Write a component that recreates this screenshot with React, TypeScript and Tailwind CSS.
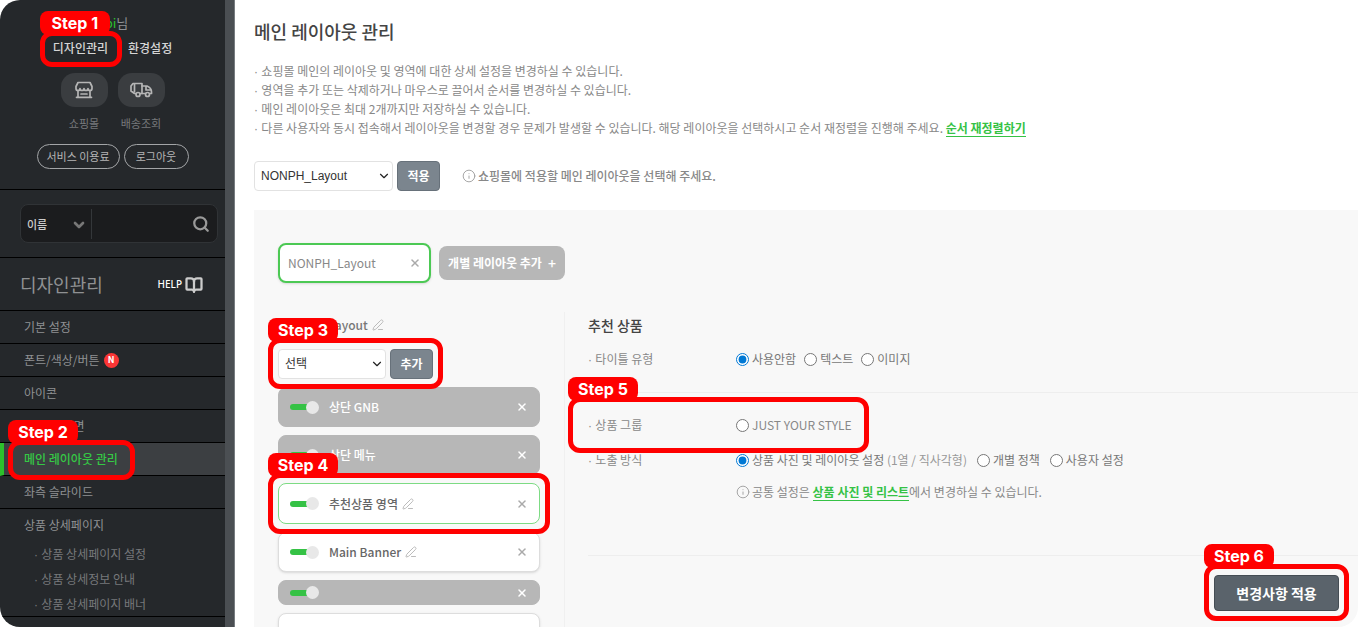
import React from 'react';
import { BookOpen, ChevronDown, Info, PenLine, Search, X } from 'lucide-react';
import clsx from 'clsx';

const NOTICES = [
  '쇼핑몰 메인의 레이아웃 및 영역에 대한 상세 설정을 변경하실 수 있습니다.',
  '영역을 추가 또는 삭제하거나 마우스로 끌어서 순서를 변경하실 수 있습니다.',
  '메인 레이아웃은 최대 2개까지만 저장하실 수 있습니다.'
];

const SUB_MENU = ['상품 상세페이지 설정', '상품 상세정보 안내', '상품 상세페이지 배너'];

const AREAS = [
  { name: '상단 GNB', fixed: true },
  { name: '상단 메뉴', fixed: true },
  { name: '추천상품 영역', active: true },
  { name: 'Main Banner' },
  { name: '', fixed: true },
  { name: 'Sub Banner' }
];

// Red frame with a numbered tab, laid over the control it points at
function Callout({ step, className }: { step: number; className: string }) {
  return (
    <span className={clsx('absolute z-20 pointer-events-none rounded-xl border-[5px] border-[#ff0000]', className)}>
      <span className="absolute -left-[5px] -top-[25px] flex h-6 w-[70px] items-center justify-center rounded-lg bg-[#ff0000] font-[Inter,sans-serif] text-base font-bold text-white whitespace-nowrap">
        Step {step}
      </span>
    </span>
  );
}

function Dot() {
  return <span className="font-['Liberation_Sans',sans-serif] leading-none">· </span>;
}

function StoreIcon() {
  return (
    <svg width="20" height="18" viewBox="0 0 20 18" fill="none" stroke="currentColor" strokeWidth="1.7" strokeLinejoin="round" strokeLinecap="round">
      <path d="M4 1.5h12l2 4v2a2 2 0 0 1-4 0 2 2 0 0 1-4 0 2 2 0 0 1-4 0 2 2 0 0 1-4 0v-2z" />
      <path d="M4 10v6M16 10v6M2.500 16.3h15M7 13h6" />
    </svg>
  );
}

function TruckIcon() {
  return (
    <svg width="24" height="18" viewBox="0 0 24 18" fill="none" stroke="currentColor" strokeWidth="1.7" strokeLinejoin="round" strokeLinecap="round">
      <path d="M7 12.5H5.5L2 10V5l2-2.500h9v10h-2M5.500 3v7.500" />
      <path d="M13 5h5c2.500 1 4.500 3.500 4.500 6v1.500H21M16.500 12.500H13M17 5.500v3.500h4.500" />
      <circle cx="9" cy="13.500" r="2" />
      <circle cx="18.500" cy="13.500" r="2" />
    </svg>
  );
}

function SelectBox({ label, value, className }: { label: string; value: string; className: string }) {
  return (
    <div className={clsx('relative', className)}>
      <select
        aria-label={label}
        defaultValue={value}
        className="h-[30px] w-full appearance-none rounded border border-[#e2e2e2] bg-white pl-1.5 font-['Liberation_Sans','Noto_Sans_CJK_KR',sans-serif] text-xs text-[#333]">
        <option>{value}</option>
      </select>
      <ChevronDown size={14} className="absolute right-0.5 top-2 pointer-events-none text-[#222]" />
    </div>
  );
}

function SmallButton({ children }: { children: React.ReactNode }) {
  return (
    <button className="h-[30px] w-[43px] rounded border border-[#67717a] bg-[#7b858e] text-xs font-bold text-white">
      {children}
    </button>
  );
}

function MenuItem({ children, active }: { children: React.ReactNode; active?: boolean }) {
  return (
    <li
      className={clsx(
        'relative flex h-[33px] items-center border-b border-black',
        active ? 'border-l-4 border-l-[#2cc02c] bg-[#3c3f42] pl-5 font-medium text-[#35c845]' : 'pl-6'
      )}>
      <a href="#" className="flex items-center gap-1">{children}</a>
      {active && <Callout step={2} className="left-1 -top-[3px] h-10 w-[127px]" />}
    </li>
  );
}

function Radio({ name, label, note, checked }: { name: string; label: string; note?: string; checked?: boolean }) {
  return (
    <label className="flex items-center gap-[3px]">
      <input type="radio" name={name} defaultChecked={checked} className="size-[13px] accent-[#0078d4]" />
      <span>
        {label}
        {note && <span className="text-[#999]"> {note}</span>}
      </span>
    </label>
  );
}

function Sidebar() {
  return (
    <aside className="flex shrink-0 overflow-hidden rounded-l-[20px] border-r border-[#777c80]">
      <div className="w-[225px] bg-[#25282b] text-xs text-[#8f9193]">
        <div className="flex h-[190px] flex-col items-center border-b border-black pt-[13px]">
          <p className="h-5 text-[13px] leading-5">
            <span className="text-[#2cc02c]">obi</span>님
          </p>
          <div className="mt-[5px] flex h-5 items-center gap-5 font-medium text-[#d5d5d5]">
            <div className="relative">
              <a href="#">디자인관리</a>
              <Callout step={1} className="-left-[13px] -top-[9px] h-9 w-[82px]" />
            </div>
            <a href="#">환경설정</a>
          </div>
          <div className="mt-[15px] flex gap-2.5 text-[11px] text-[#77797b]">
            <a href="#" className="flex w-[47px] flex-col items-center gap-[9px] whitespace-nowrap">
              <span className="flex h-[34px] w-full items-center justify-center rounded-[14px] bg-[#3a3d40] text-[#b5b5b5]"><StoreIcon /></span>
              쇼핑몰
            </a>
            <a href="#" className="flex w-[47px] flex-col items-center gap-[9px] whitespace-nowrap">
              <span className="flex h-[34px] w-full items-center justify-center rounded-[14px] bg-[#3a3d40] text-[#b5b5b5]"><TruckIcon /></span>
              배송조회
            </a>
          </div>
          <div className="mt-[13px] flex gap-1 text-[11px] text-[#b5b5b5]">
            <button className="h-[25px] w-[83px] rounded-full border border-[#a3a5a7]">서비스 이용료</button>
            <button className="h-[25px] w-[65px] rounded-full border border-[#a3a5a7]">로그아웃</button>
          </div>
        </div>

        <div className="border-b border-black py-3.5 pl-5 pr-[7px]">
          <div className="flex h-[39px] items-center rounded-lg border border-[#303336] bg-[#1b1c1e]">
            <div className="relative w-[70px]">
              <select aria-label="검색 조건" className="w-full appearance-none bg-transparent pl-1.5 text-[11px] font-medium text-[#ccc]">
                <option>이름</option>
              </select>
              <ChevronDown size={16} strokeWidth={4} className="absolute right-1 top-px pointer-events-none text-[#777]" />
            </div>
            <input aria-label="검색어" className="h-[30px] min-w-0 flex-1 border-l border-[#34373a] bg-transparent" />
            <button aria-label="검색" className="mr-[7px] text-[#999]"><Search size={18} strokeWidth={3} /></button>
          </div>
        </div>

        <div className="flex h-[53px] items-center justify-between border-b border-black pl-5 pr-[22px]">
          <h2 className="text-lg">디자인관리</h2>
          <a href="#" className="flex items-center gap-[3px] pt-0.5 font-['Noto_Sans',sans-serif] text-[10px] font-medium text-white">
            HELP <BookOpen size={18} strokeWidth={3} className="text-[#ccc]" />
          </a>
        </div>

        <ul>
          <MenuItem>기본 설정</MenuItem>
          <MenuItem>
            폰트/색상/버튼
            <span className="flex size-[15px] items-center justify-center rounded-full bg-[#fb3535] text-[9px] font-bold text-white">N</span>
          </MenuItem>
          <MenuItem>아이콘</MenuItem>
          <MenuItem>메인 첫 화면</MenuItem>
          <MenuItem active>메인 레이아웃 관리</MenuItem>
          <MenuItem>좌측 슬라이드</MenuItem>
          <li className="border-b border-black pl-6">
            <a href="#" className="flex h-8 items-center">상품 상세페이지</a>
            <ul className="pl-2.5 text-[#77797b]">
              {SUB_MENU.map((item) => (
                <li key={item} className="flex h-[25px] items-center">
                  <a href="#"><Dot />{item}</a>
                </li>
              ))}
            </ul>
          </li>
        </ul>
      </div>
      <div className="w-[9px] bg-[#4b4f53]" />
    </aside>
  );
}

function AreaRow({ area }: { area: { name: string; fixed?: boolean; active?: boolean } }) {
  return (
    <li
      className={clsx(
        'relative flex items-center rounded-lg border px-[11px] text-xs font-medium',
        area.active ? 'h-[41px]' : area.name ? 'h-10' : 'h-[25px]',
        area.fixed ? 'border-[#b7b7b7] bg-[#b7b7b7] text-white' : 'bg-white text-[#666]',
        !area.fixed && (area.active ? 'border-[#7ddb84]' : 'border-[#ddd] shadow-sm')
      )}>
      <input
        type="checkbox"
        defaultChecked
        aria-label={area.name || '구분선'}
        className="mr-2.5 flex h-[13px] w-[29px] appearance-none items-center before:h-1.5 before:w-[18px] before:shrink-0 before:rounded-l-full before:bg-[#35c245] after:-ml-0.5 after:size-[13px] after:shrink-0 after:rounded-full after:bg-[#e8e8e8]"
      />
      {area.name}
      {!area.fixed && <PenLine size={12} className="ml-1 text-[#bbb]" />}
      <button aria-label="삭제" className={clsx('ml-auto', area.fixed ? 'text-white' : 'text-[#aaa]')}>
        <X size={12} strokeWidth={3} />
      </button>
      {area.active && <Callout step={4} className="-inset-x-[11px] -inset-y-[11px]" />}
    </li>
  );
}

function InfoMark() {
  return <Info size={14} strokeWidth={1.5} className="shrink-0 text-[#999]" />;
}

export default function App() {
  return (
    <div className="flex h-screen overflow-hidden bg-white font-['Noto_Sans_CJK_KR',sans-serif]">
      <Sidebar />
      <main className="flex min-w-0 flex-1 flex-col pl-[19px] text-xs text-[#888]">
        <h1 className="mt-[17px] text-lg font-medium leading-7 text-[#444]">메인 레이아웃 관리</h1>
        <div className="mt-4 leading-[19px]">
          {NOTICES.map((notice) => (
            <p key={notice}><Dot />{notice}</p>
          ))}
          <p>
            <Dot />
            다른 사용자와 동시 접속해서 레이아웃을 변경할 경우 문제가 발생할 수 있습니다. 해당 레이아웃을 선택하시고 순서 재정렬을 진행해 주세요.{' '}
            <a href="#" className="border-b border-[#35c245] font-bold text-[#35c245]">순서 재정렬하기</a>
          </p>
        </div>

        <div className="mt-6 flex items-center gap-1">
          <SelectBox label="메인 레이아웃" value="NONPH_Layout" className="w-[139px]" />
          <SmallButton>적용</SmallButton>
          <p className="ml-[18px] flex items-center gap-0.5 font-medium"><InfoMark />쇼핑몰에 적용할 메인 레이아웃을 선택해 주세요.</p>
        </div>

        <section className="mt-[19px] min-h-0 flex-1 rounded-br-[20px] bg-[#f8f8f8] pl-6 pt-[33px]">
          <div className="flex items-center gap-2">
            <div className="flex h-10 w-[153px] items-center justify-between rounded-lg border-2 border-[#4cc954] bg-white px-2 shadow-sm">
              NONPH_Layout
              <button aria-label="닫기" className="text-[#aaa]"><X size={12} strokeWidth={3} /></button>
            </div>
            <button className="flex h-[34px] w-[126px] items-center justify-center gap-1.5 rounded-lg bg-[#b7b7b7] font-bold text-white">
              개별 레이아웃 추가 <span className="text-sm font-medium">+</span>
            </button>
          </div>

          <div className="mt-[29px] flex">
            <div className="w-[262px] shrink-0">
              <h3 className="flex h-[26px] items-center gap-1 font-medium text-[#777]">
                NONPH_Layout <PenLine size={12} className="text-[#bbb]" />
              </h3>
              <div className="relative mt-[11px] flex w-[155px] gap-1">
                <SelectBox label="영역 선택" value="선택" className="w-[108px]" />
                <SmallButton>추가</SmallButton>
                <Callout step={3} className="-inset-x-2.5 -bottom-2.5 -top-[11px]" />
              </div>
              <ul className="mt-2 flex flex-col gap-2">
                {AREAS.map((area, i) => (
                  <AreaRow key={i} area={area} />
                ))}
              </ul>
            </div>

            <div className="ml-6 min-w-0 flex-1 border-l border-[#f0f0f0] pl-[23px]">
              <h3 className="h-[26px] text-sm font-medium leading-[26px] text-[#444]">추천 상품</h3>
              <div className="flex h-[55px] items-start border-b border-[#eee] pt-[13px]">
                <p className="w-[148px]"><Dot />타이틀 유형</p>
                <div className="flex gap-2 text-[#777]">
                  <Radio name="title" label="사용안함" checked />
                  <Radio name="title" label="텍스트" />
                  <Radio name="title" label="이미지" />
                </div>
              </div>
              <div className="relative mt-[5px] flex h-[54px] items-center">
                <p className="w-[148px]"><Dot />상품 그룹</p>
                <Radio name="group" label="JUST YOUR STYLE" />
                <Callout step={5} className="-left-5 -inset-y-px w-[301px]" />
              </div>
              <div className="flex h-[104px] items-start border-b border-[#eee]">
                <p className="w-[148px]"><Dot />노출 방식</p>
                <div>
                  <div className="flex gap-2.5 text-[#777]">
                    <Radio name="display" label="상품 사진 및 레이아웃 설정" note="(1열 / 직사각형)" checked />
                    <Radio name="display" label="개별 정책" />
                    <Radio name="display" label="사용자 설정" />
                  </div>
                  <p className="mt-4 flex items-center gap-0.5">
                    <InfoMark />
                    <span>
                      공통 설정은 <a href="#" className="border-b border-[#35c245] font-bold text-[#35c245]">상품 사진 및 리스트</a>에서 변경하실 수 있습니다.
                    </span>
                  </p>
                </div>
              </div>
              <div className="flex justify-end pr-[19px] pt-[19px]">
                <div className="relative">
                  <button className="h-9 w-[125px] rounded border border-[#454d54] bg-[#5a636b] text-sm font-bold text-white">변경사항 적용</button>
                  <Callout step={6} className="-inset-x-2.5 -bottom-2.5 -top-[11px]" />
                </div>
              </div>
            </div>
          </div>
        </section>
      </main>
    </div>
  );
}
